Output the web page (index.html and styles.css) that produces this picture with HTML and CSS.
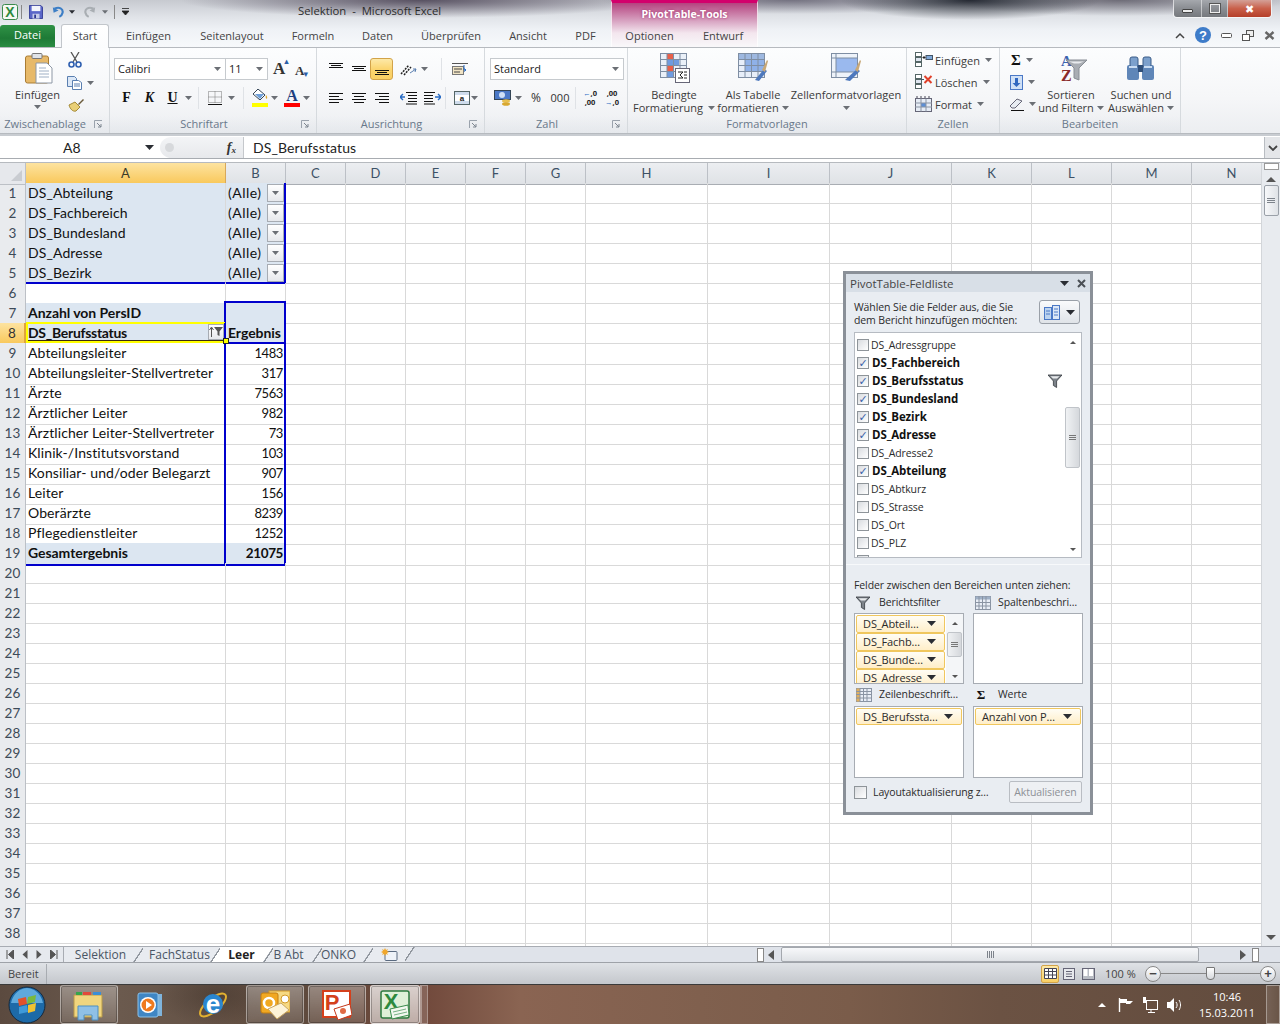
FILE: index.html
```html
<!DOCTYPE html>
<html lang="de">
<head>
<meta charset="utf-8">
<title>Selektion - Microsoft Excel</title>
<link rel="stylesheet" href="styles.css">
</head>
<body>
<svg class="defs" width="0" height="0">
  <symbol id="funnel" viewBox="0 0 14 14"><path d="M0 1h14L8.600 7v6.500L5.400 11.500V7z" fill="#7d838a" stroke="#33383e" stroke-width=".8"/><path d="M2.500 2.200h9L9 4.500H5z" fill="#e8eaec"/></symbol>
  <symbol id="tblgrid" viewBox="0 0 16 14"><rect x=".5" y=".5" width="15" height="13" fill="#e9eef6" stroke="#8a94a3"/><rect x=".5" y=".5" width="15" height="3" fill="#9fb0c6"/><path d="M4 0v14M7.500 0v14M11 0v14M0 6.500h16M0 10h16" stroke="#8a94a3"/></symbol>
  <symbol id="tblgold" viewBox="0 0 16 14"><rect x=".5" y=".5" width="15" height="13" fill="#e9eef6" stroke="#8a94a3"/><rect x=".5" y=".5" width="3.500" height="13" fill="#e0b060"/><path d="M4 0v14M7.500 0v14M11 0v14M0 3.500h16M0 6.500h16M0 10h16" stroke="#8a94a3"/></symbol>
  <symbol id="lines-c" viewBox="0 0 16 14"><path d="M1 2.500h14M3 5.500h10M1 8.500h14M3 11.500h10" stroke="#111" fill="none"/></symbol>
  <symbol id="lines-l" viewBox="0 0 16 14"><path d="M1 2.500h14M1 5.500h10M1 8.500h14M1 11.500h10" stroke="#111" fill="none"/></symbol>
  <symbol id="lines-r" viewBox="0 0 16 14"><path d="M1 2.500h14M5 5.500h10M1 8.500h14M5 11.500h10" stroke="#111" fill="none"/></symbol>
  <symbol id="al-top" viewBox="0 0 16 14"><path d="M1 1.500h14M3 3.500h10M1 5.500h14" stroke="#111" fill="none"/></symbol>
  <symbol id="al-mid" viewBox="0 0 16 14"><path d="M1 4.500h14M3 6.500h10M1 8.500h14" stroke="#111" fill="none"/></symbol>
  <symbol id="al-bot" viewBox="0 0 16 14"><path d="M1 8.500h14M3 10.500h10M1 12.500h14" stroke="#111" fill="none"/></symbol>
  <symbol id="indent-l" viewBox="0 0 18 14"><path d="M6 1.500h11M8 4.500h9M8 7.500h9M8 10.500h9M6 13h11" stroke="#111" fill="none"/><path d="M0 6h5M0 6l3-3M0 6l3 3" stroke="#2a6cc4" stroke-width="1.400" fill="none"/></symbol>
  <symbol id="indent-r" viewBox="0 0 18 14"><path d="M1 1.500h11M1 4.500h9M1 7.500h9M1 10.500h9M1 13h11" stroke="#111" fill="none"/><path d="M12 6h6M18 6l-3-3M18 6l-3 3" stroke="#2a6cc4" stroke-width="1.400" fill="none"/></symbol>
  <symbol id="launch" viewBox="0 0 9 9"><path d="M.5 8V.5H8" stroke="#9aa2ac" fill="none"/><path d="M3 3l4 4M7 4v3H4" stroke="#7d858f" fill="none"/></symbol>
  <symbol id="cell-ins" viewBox="0 0 18 16"><rect x=".5" y=".5" width="6" height="4" fill="#fff" stroke="#566"/><rect x=".5" y="5.500" width="6" height="4" fill="#dfe6f0" stroke="#566"/><rect x=".5" y="10.500" width="6" height="4" fill="#fff" stroke="#566"/><rect x="11" y="3.500" width="6.500" height="4" fill="#7fa8d8" stroke="#456"/><path d="M7.500 5.500h3M9 4v3" stroke="#222"/></symbol>
  <symbol id="cell-del" viewBox="0 0 18 16"><rect x=".5" y=".5" width="6" height="4" fill="#fff" stroke="#566"/><rect x=".5" y="5.500" width="6" height="4" fill="#dfe6f0" stroke="#566"/><rect x=".5" y="10.500" width="6" height="4" fill="#fff" stroke="#566"/><path d="M6 5.500h3" stroke="#456"/><path d="M9.500 2l7 7M16.500 2l-7 7" stroke="#e0402a" stroke-width="2"/></symbol>
  <symbol id="cell-fmt" viewBox="0 0 18 16"><rect x=".5" y="2.500" width="16" height="13" fill="#e6ecf5" stroke="#667"/><rect x="6" y="7" width="5" height="4" fill="#5c8fd6"/><path d="M6 2.500v13M11 2.500v13M0 7h17M0 11h17" stroke="#8a94a3"/><path d="M2 0v2M6 0v2M10 0v2M14 0v2" stroke="#445"/></symbol>
  <symbol id="table-big" viewBox="0 0 30 30"><rect x=".5" y=".5" width="26" height="24" fill="#e7eef9" stroke="#7f8ea3"/><rect x="1" y="1" width="25" height="5" fill="#9eb8e0"/><rect x="7" y="6" width="19" height="13" fill="#8fb1e8"/><path d="M7 0v25M13.500 0v25M20 0v25M0 6.500h27M0 12.500h27M0 18.500h27" stroke="#7f8ea3"/><path d="M17 27l9-11 3 2-8 10z" fill="#4d78bd"/><path d="M24 17l5-10 1 1-3 11z" fill="#c8a877"/></symbol>
  <symbol id="style-big" viewBox="0 0 30 30"><rect x=".5" y=".5" width="26" height="24" fill="#eef3fa" stroke="#7f8ea3"/><rect x="5" y="5" width="21" height="14" fill="#9ab9ee"/><path d="M5 0v25M0 5h27M0 19h27" stroke="#7f8ea3"/><path d="M14 27l12-11 3 2-10 10z" fill="#4d78bd"/><path d="M24 17l5-10 1 1-3 11z" fill="#c8a877"/></symbol>
  <symbol id="dn" viewBox="0 0 7 4"><path d="M0 0h7L3.500 4z" fill="#6b6f75"/></symbol>
  <symbol id="dnk" viewBox="0 0 9 5"><path d="M0 0h9L4.500 5z" fill="#2a2d33"/></symbol>
</svg>

<div class="app">
  <header class="chrome">
    <div class="titlerow">
      <div class="qat">
        <svg class="xl-small" width="16" height="16" viewBox="0 0 16 16"><rect x=".5" y=".5" width="15" height="15" rx="2" fill="#f5f8f3" stroke="#3b8a4e"/><text x="8" y="13" text-anchor="middle" class="xl-x">X</text></svg>
        <span class="qsep"></span>
        <svg width="14" height="14" viewBox="0 0 16 16"><path d="M.5.500h13l2 2v13H.5z" fill="#5a66c8" stroke="#2b3590"/><rect x="3" y="1" width="10" height="6" fill="#f3f5fb"/><rect x="4" y="10" width="8" height="5.500" fill="#c6cce8"/><rect x="6" y="11" width="2" height="4" fill="#2b3590"/></svg>
        <svg class="q-undo" width="13" height="12" viewBox="0 0 16 14"><path d="M3 3c6-3 11 0 10 5-.5 2.500-2 4-4 5" fill="none" stroke="#3c7ec6" stroke-width="2.600"/><path d="M1 1l1 7 6-3z" fill="#3c7ec6"/></svg>
        <svg class="q-dn" width="6" height="4"><use href="#dnk"/></svg>
        <svg class="q-redo" width="13" height="12" viewBox="0 0 16 14"><path d="M13 3C7 0 2 3 3 8c.5 2.500 2 4 4 5" fill="none" stroke="#a9aeb3" stroke-width="2.600"/><path d="M15 1l-1 7-6-3z" fill="#a9aeb3"/></svg>
        <svg class="q-dn2" width="6" height="4"><use href="#dn"/></svg>
        <span class="qsep"></span>
        <svg class="q-cust" width="7" height="7" viewBox="0 0 7 7"><path d="M0 .5h7M0 3h7L3.500 7z" stroke="#222" fill="#222" stroke-width=".8"/></svg>
      </div>
      <div class="doc-title">Selektion&nbsp; - &nbsp;Microsoft Excel</div>
      <div class="win-btns">
        <span class="wb wb-min"><i></i></span>
        <span class="wb wb-max"><i></i></span>
        <span class="wb wb-close">✖</span>
      </div>
    </div>
    <div class="pivot-band"><span>PivotTable-Tools</span></div>
    <nav class="tabs">
      <span class="tab-file">Datei</span>
      <span class="tab-start">Start</span>
      <span class="tab">Einfügen</span>
      <span class="tab">Seitenlayout</span>
      <span class="tab">Formeln</span>
      <span class="tab">Daten</span>
      <span class="tab">Überprüfen</span>
      <span class="tab">Ansicht</span>
      <span class="tab">PDF</span>
      <span class="tab">Optionen</span>
      <span class="tab">Entwurf</span>
      <span class="tab-right">
        <svg width="10" height="7" viewBox="0 0 10 7"><path d="M1 6l4-4 4 4" fill="none" stroke="#444" stroke-width="1.500"/></svg>
        <svg width="16" height="16" viewBox="0 0 16 16"><circle cx="8" cy="8" r="8" fill="#3e7cc9"/><text x="8" y="12.500" text-anchor="middle" class="help-q">?</text></svg>
        <svg width="11" height="5" viewBox="0 0 11 5"><rect x=".5" y=".5" width="10" height="4" rx="1" fill="#fff" stroke="#555"/></svg>
        <svg width="12" height="11" viewBox="0 0 12 11"><rect x="4.500" y=".5" width="7" height="6" fill="#eee" stroke="#555"/><rect x=".5" y="4.500" width="7" height="6" fill="#fff" stroke="#555"/></svg>
        <svg width="11" height="9" viewBox="0 0 11 9"><path d="M1.500 1l8 7M9.500 1l-8 7" stroke="#666" stroke-width="2.400"/></svg>
      </span>
    </nav>
  </header>

  <section class="ribbon">
    <div class="group g-clip">
      <div class="gbody clip-body">
        <div class="bigbtn paste-btn">
          <svg width="28" height="32" viewBox="0 0 28 32"><rect x=".5" y="3" width="23" height="27" rx="2" fill="#e7b969" stroke="#a97c34"/><rect x="7" y=".5" width="10" height="5" rx="1" fill="#dfe3e8" stroke="#777"/><path d="M11 10h11l5 5v15H11z" fill="#fff" stroke="#8d97a5"/><path d="M14 15h7M14 18h10M14 21h10M14 24h10" stroke="#9fb0c5"/></svg>
          <span class="paste-label">Einfügen</span>
          <svg class="big-dn" width="7" height="4"><use href="#dn"/></svg>
        </div>
        <div class="clip-col">
          <svg width="14" height="16" viewBox="0 0 14 16"><path d="M3 0l6 10M11 0L5 10" stroke="#555" stroke-width="1.300"/><circle cx="3.500" cy="12.500" r="2.500" fill="none" stroke="#2f5fb0" stroke-width="1.600"/><circle cx="10.500" cy="12.500" r="2.500" fill="none" stroke="#2f5fb0" stroke-width="1.600"/></svg>
          <span class="copy-row"><svg width="15" height="14" viewBox="0 0 15 14"><path d="M.5.500h7l2 2v8H.5z" fill="#dbe7f6" stroke="#5a7fb0"/><path d="M5.500 4.500h6l3 2v7h-9z" fill="#fff" stroke="#5a7fb0"/><path d="M7 8h6M7 10h6" stroke="#5a7fb0"/></svg><svg width="7" height="4"><use href="#dn"/></svg></span>
          <svg width="17" height="14" viewBox="0 0 17 14"><path d="M1 7l6-3 5 5-4 4c-3 1-6-2-7-6z" fill="#e9cf76" stroke="#a48a38"/><path d="M10 6l5-5 1 1-5 5z" fill="#6a5a3a"/></svg>
        </div>
      </div>
      <div class="glabel lbl-clip">Zwischenablage<svg class="launch" width="9" height="9"><use href="#launch"/></svg></div>
    </div>

    <div class="group g-font">
      <div class="gbody col">
        <div class="ctl-row font-row1">
          <span class="combo combo-font">Calibri<svg width="7" height="4"><use href="#dn"/></svg></span>
          <span class="combo combo-size">11<svg width="7" height="4"><use href="#dn"/></svg></span>
          <span class="grow">A<sup>▴</sup></span>
          <span class="shrink">A<sup>▾</sup></span>
        </div>
        <div class="ctl-row font-row2">
          <span class="ser">F</span>
          <span class="ser ital">K</span>
          <span class="ser under">U</span>
          <svg class="dd" width="7" height="4"><use href="#dn"/></svg>
          <span class="vsep vsep-a"></span>
          <svg class="border-ic" width="14" height="14" viewBox="0 0 14 14"><path d="M.5.500h13v11H.5zM7 .5v11M.5 6h13" stroke="#777" fill="none" stroke-dasharray="1 1"/><path d="M0 13.500h14" stroke="#111"/></svg>
          <svg class="dd" width="7" height="4"><use href="#dn"/></svg>
          <span class="vsep vsep-b"></span>
          <span class="bar-ic"><svg width="16" height="11" viewBox="0 0 16 11"><path d="M6 0l7 6-5 5-7-6z" fill="#fff" stroke="#345"/><path d="M3 5h9L8 10z" fill="#6f9fd8"/><path d="M14 6c1.500 2 1.500 3 .5 4-1-1-1-2-.5-4z" fill="#e0a92c"/></svg><i class="yellow"></i></span>
          <svg class="dd" width="7" height="4"><use href="#dn"/></svg>
          <span class="bar-ic"><span class="fc-a">A</span><i class="red"></i></span>
          <svg class="dd" width="7" height="4"><use href="#dn"/></svg>
        </div>
      </div>
      <div class="glabel"><span class="lbl-shift">Schriftart</span><svg class="launch" width="9" height="9"><use href="#launch"/></svg></div>
    </div>

    <div class="group g-align">
      <div class="gbody col">
        <div class="ctl-row align-row1">
          <span class="ic22"><svg width="16" height="14"><use href="#al-top"/></svg></span>
          <span class="ic22"><svg width="16" height="14"><use href="#al-mid"/></svg></span>
          <span class="ic22 on"><svg width="16" height="14"><use href="#al-bot"/></svg></span>
          <span class="ic22 orient"><svg width="18" height="14" viewBox="0 0 18 14"><path d="M1 12L9 3M4 13l7-8" stroke="#222" stroke-width="1.500" stroke-dasharray="2 1"/><path d="M10 11l6-4M16 7l-3 0M16 7l-1 3" stroke="#5a7fb0" fill="none"/></svg></span>
          <svg class="dd" width="7" height="4"><use href="#dn"/></svg>
          <span class="vsep vsep-c"></span>
          <svg width="16" height="14" viewBox="0 0 16 14"><path d="M0 1.500h16" stroke="#555"/><rect x=".5" y="4.500" width="11" height="8" fill="#f1e4c4" stroke="#777"/><path d="M2 7h8M2 10h6" stroke="#444"/><path d="M12 3v5l2 0M14 8l-2-1.500M14 8l-2 1.500" stroke="#2a6cc4" fill="none"/></svg>
        </div>
        <div class="ctl-row align-row2">
          <span class="ic22"><svg width="16" height="14"><use href="#lines-l"/></svg></span>
          <span class="ic22"><svg width="16" height="14"><use href="#lines-c"/></svg></span>
          <span class="ic22"><svg width="16" height="14"><use href="#lines-r"/></svg></span>
          <span class="ic22 orient"><svg width="18" height="14"><use href="#indent-l"/></svg></span>
          <span class="ic22"><svg width="18" height="14"><use href="#indent-r"/></svg></span>
          <span class="vsep vsep-d"></span>
          <svg width="16" height="14" viewBox="0 0 16 14"><rect x=".5" y=".5" width="15" height="13" fill="#cfdcec" stroke="#566"/><rect x="1" y="4" width="14" height="6" fill="#fff"/><text x="8" y="9.500" text-anchor="middle" class="merge-a">a</text></svg>
          <svg class="dd" width="7" height="4"><use href="#dn"/></svg>
        </div>
      </div>
      <div class="glabel"><span class="lbl-shift">Ausrichtung</span><svg class="launch" width="9" height="9"><use href="#launch"/></svg></div>
    </div>

    <div class="group g-num">
      <div class="gbody col">
        <div class="ctl-row num-row1"><span class="combo combo-std">Standard<svg width="7" height="4"><use href="#dn"/></svg></span></div>
        <div class="ctl-row num-row2">
          <svg width="18" height="16" viewBox="0 0 18 16"><rect x=".5" y=".5" width="16" height="9" fill="#4a78c6" stroke="#345"/><circle cx="8" cy="5" r="3" fill="#cfe0f6"/><ellipse cx="12" cy="11" rx="4" ry="1.800" fill="#e8c050"/><ellipse cx="12" cy="14" rx="4" ry="1.800" fill="#d8a830"/></svg>
          <svg class="dd" width="7" height="4"><use href="#dn"/></svg>
          <span class="num-t pct">%</span>
          <span class="num-t tsd">000</span>
          <span class="vsep vsep-e"></span>
          <span class="dec"><b><em>←</em>,0</b><b>,00</b></span>
          <span class="dec"><b>,00</b><b><em>→</em>,0</b></span>
        </div>
      </div>
      <div class="glabel"><span class="lbl-shift">Zahl</span><svg class="launch" width="9" height="9"><use href="#launch"/></svg></div>
    </div>

    <div class="group g-styles">
      <div class="gbody styles-body">
        <div class="bigbtn b-cond">
          <svg width="30" height="30" viewBox="0 0 30 30"><rect x=".5" y=".5" width="26" height="24" fill="#eaf0f8" stroke="#7f8ea3"/><rect x="7" y="1" width="6" height="6" fill="#e8604a"/><rect x="7" y="7" width="12" height="6" fill="#6f9be0"/><rect x="7" y="13" width="6" height="6" fill="#e8604a"/><rect x="7" y="19" width="6" height="5" fill="#6f9be0"/><path d="M7 0v25M13.500 0v25M20 0v25M0 6.500h27M0 12.500h27M0 18.500h27" stroke="#7f8ea3"/><rect x="15.500" y="15.500" width="14" height="14" fill="#fff" stroke="#667"/><path d="M18 19h5l-3 3 3 3h-5M24 19h3M24 22h3M24 25h3" fill="none" stroke="#222"/></svg>
          <span class="big-t">Bedingte</span>
          <span class="big-t">Formatierung <svg width="7" height="4"><use href="#dn"/></svg></span>
        </div>
        <div class="bigbtn b-table">
          <svg width="30" height="30"><use href="#table-big"/></svg>
          <span class="big-t">Als Tabelle</span>
          <span class="big-t">formatieren <svg width="7" height="4"><use href="#dn"/></svg></span>
        </div>
        <div class="bigbtn b-style">
          <svg width="30" height="30"><use href="#style-big"/></svg>
          <span class="big-t">Zellenformatvorlagen</span>
          <span class="big-t"><svg width="7" height="4"><use href="#dn"/></svg></span>
        </div>
      </div>
      <div class="glabel">Formatvorlagen</div>
    </div>

    <div class="group g-cells">
      <div class="gbody col cells-body">
        <span class="cell-cmd"><svg width="18" height="16"><use href="#cell-ins"/></svg>Einfügen <svg class="cdd" width="7" height="4"><use href="#dn"/></svg></span>
        <span class="cell-cmd"><svg width="18" height="16"><use href="#cell-del"/></svg>Löschen <svg class="cdd" width="7" height="4"><use href="#dn"/></svg></span>
        <span class="cell-cmd"><svg width="18" height="16"><use href="#cell-fmt"/></svg>Format <svg class="cdd" width="7" height="4"><use href="#dn"/></svg></span>
      </div>
      <div class="glabel">Zellen</div>
    </div>

    <div class="group g-edit">
      <div class="gbody edit-body">
        <div class="edit-col">
          <span class="edit-cmd"><span class="sigma">Σ</span><svg width="7" height="4"><use href="#dn"/></svg></span>
          <span class="edit-cmd"><svg width="13" height="15" viewBox="0 0 13 15"><rect x=".5" y=".5" width="12" height="14" fill="#cfe0f6" stroke="#4a78c6"/><path d="M5 3h3v5h2.500L6.500 12 2.500 8H5z" fill="#2f67c0"/></svg><svg width="7" height="4"><use href="#dn"/></svg></span>
          <span class="edit-cmd"><svg width="15" height="13" viewBox="0 0 15 13"><path d="M1 8l7-7 5 2-7 7H3z" fill="#e8ecf2" stroke="#667"/><path d="M2 12.500h13" stroke="#111"/></svg><svg width="7" height="4"><use href="#dn"/></svg></span>
        </div>
        <div class="bigbtn b-sort">
          <svg width="32" height="30" viewBox="0 0 32 30"><text x="6" y="13" class="sort-a">A</text><text x="6" y="28" class="sort-z">Z</text><path d="M11 7h21l-8 8v12l-5-2V15z" fill="#a9adb3" stroke="#888d94"/><path d="M14 8.500h15l-5 2h-5z" fill="#e9ebee"/></svg>
          <span class="big-t">Sortieren</span>
          <span class="big-t">und Filtern <svg width="7" height="4"><use href="#dn"/></svg></span>
        </div>
        <div class="bigbtn b-find">
          <svg width="30" height="30" viewBox="0 0 30 30"><rect x="1" y="12" width="12" height="15" rx="2" fill="#5f86b8"/><rect x="16" y="12" width="12" height="15" rx="2" fill="#5f86b8"/><rect x="4" y="4" width="8" height="10" rx="2" fill="#7ca0cc" stroke="#3b5c88"/><rect x="17" y="4" width="8" height="10" rx="2" fill="#7ca0cc" stroke="#3b5c88"/><rect x="12" y="12" width="5" height="7" fill="#2f4f7a"/><path d="M3 14h8M18 14h8" stroke="#c9dcf2" stroke-width="2"/></svg>
          <span class="big-t">Suchen und</span>
          <span class="big-t">Auswählen <svg width="7" height="4"><use href="#dn"/></svg></span>
        </div>
      </div>
      <div class="glabel">Bearbeiten</div>
    </div>
  </section>

  <section class="formula">
    <div class="namebox"><span>A8</span><svg width="9" height="5"><use href="#dnk"/></svg></div>
    <div class="fx-wrap"><span class="fx-knob"></span><span class="fx">f<sub>x</sub></span></div>
    <div class="fx-input">DS_Berufsstatus</div>
    <div class="fx-exp"><svg width="10" height="6" viewBox="0 0 10 6"><path d="M1 1l4 4 4-4" fill="none" stroke="#444" stroke-width="1.800"/></svg></div>
  </section>

  <section class="sheet">
    <div class="grid">
      <div class="colheads">
        <span class="corner"></span><span class="ch active">A</span><span class="ch">B</span><span class="ch">C</span><span class="ch">D</span><span class="ch">E</span><span class="ch">F</span><span class="ch">G</span><span class="ch">H</span><span class="ch">I</span><span class="ch">J</span><span class="ch">K</span><span class="ch">L</span><span class="ch">M</span><span class="ch">N</span>
      </div>
      <div class="row"><span class="rh">1</span><span class="c fill">DS_Abteilung</span><span class="c fill pf"><span>(Alle)</span><span class="pf-btn"><svg width="7" height="4"><use href="#dn"/></svg></span></span><span class="rest"></span></div>
      <div class="row"><span class="rh">2</span><span class="c fill">DS_Fachbereich</span><span class="c fill pf"><span>(Alle)</span><span class="pf-btn"><svg width="7" height="4"><use href="#dn"/></svg></span></span><span class="rest"></span></div>
      <div class="row"><span class="rh">3</span><span class="c fill">DS_Bundesland</span><span class="c fill pf"><span>(Alle)</span><span class="pf-btn"><svg width="7" height="4"><use href="#dn"/></svg></span></span><span class="rest"></span></div>
      <div class="row"><span class="rh">4</span><span class="c fill">DS_Adresse</span><span class="c fill pf"><span>(Alle)</span><span class="pf-btn"><svg width="7" height="4"><use href="#dn"/></svg></span></span><span class="rest"></span></div>
      <div class="row"><span class="rh">5</span><span class="c fill bb">DS_Bezirk</span><span class="c fill pf bb"><span>(Alle)</span><span class="pf-btn"><svg width="7" height="4"><use href="#dn"/></svg></span></span><span class="rest"></span></div>
      <div class="row"><span class="rh">6</span><span class="c"></span><span class="c"></span><span class="rest"></span></div>
      <div class="row"><span class="rh">7</span><span class="c fill b">Anzahl von PersID</span><span class="c fill vbox btop"></span><span class="rest"></span></div>
      <div class="row"><span class="rh active">8</span><span class="c fill b cur">DS_Berufsstatus<span class="sort-btn"><svg width="14" height="12" viewBox="0 0 14 12"><path d="M2.500 11V2M.5 4l2-3 2 3" fill="none" stroke="#555"/><path d="M5 1h9L10.500 5.500V10L8.500 9V5.500z" fill="#555"/></svg></span><i class="handle"></i></span><span class="c fill b vbox bb">Ergebnis</span><span class="rest"></span></div>
      <div class="row"><span class="rh">9</span><span class="c">Abteilungsleiter</span><span class="c num vbox">1483</span><span class="rest"></span></div>
      <div class="row"><span class="rh">10</span><span class="c">Abteilungsleiter-Stellvertreter</span><span class="c num vbox">317</span><span class="rest"></span></div>
      <div class="row"><span class="rh">11</span><span class="c">Ärzte</span><span class="c num vbox">7563</span><span class="rest"></span></div>
      <div class="row"><span class="rh">12</span><span class="c">Ärztlicher Leiter</span><span class="c num vbox">982</span><span class="rest"></span></div>
      <div class="row"><span class="rh">13</span><span class="c">Ärztlicher Leiter-Stellvertreter</span><span class="c num vbox">73</span><span class="rest"></span></div>
      <div class="row"><span class="rh">14</span><span class="c">Klinik-/Institutsvorstand</span><span class="c num vbox">103</span><span class="rest"></span></div>
      <div class="row"><span class="rh">15</span><span class="c">Konsiliar- und/oder Belegarzt</span><span class="c num vbox">907</span><span class="rest"></span></div>
      <div class="row"><span class="rh">16</span><span class="c">Leiter</span><span class="c num vbox">156</span><span class="rest"></span></div>
      <div class="row"><span class="rh">17</span><span class="c">Oberärzte</span><span class="c num vbox">8239</span><span class="rest"></span></div>
      <div class="row"><span class="rh">18</span><span class="c lb">Pflegedienstleiter</span><span class="c num vbox lb">1252</span><span class="rest"></span></div>
      <div class="row"><span class="rh">19</span><span class="c fill b bb">Gesamtergebnis</span><span class="c fill b num vbox bb">21075</span><span class="rest"></span></div>
      <div class="row"><span class="rh">20</span><span class="c"></span><span class="c"></span><span class="rest"></span></div>
      <div class="row"><span class="rh">21</span><span class="c"></span><span class="c"></span><span class="rest"></span></div>
      <div class="row"><span class="rh">22</span><span class="c"></span><span class="c"></span><span class="rest"></span></div>
      <div class="row"><span class="rh">23</span><span class="c"></span><span class="c"></span><span class="rest"></span></div>
      <div class="row"><span class="rh">24</span><span class="c"></span><span class="c"></span><span class="rest"></span></div>
      <div class="row"><span class="rh">25</span><span class="c"></span><span class="c"></span><span class="rest"></span></div>
      <div class="row"><span class="rh">26</span><span class="c"></span><span class="c"></span><span class="rest"></span></div>
      <div class="row"><span class="rh">27</span><span class="c"></span><span class="c"></span><span class="rest"></span></div>
      <div class="row"><span class="rh">28</span><span class="c"></span><span class="c"></span><span class="rest"></span></div>
      <div class="row"><span class="rh">29</span><span class="c"></span><span class="c"></span><span class="rest"></span></div>
      <div class="row"><span class="rh">30</span><span class="c"></span><span class="c"></span><span class="rest"></span></div>
      <div class="row"><span class="rh">31</span><span class="c"></span><span class="c"></span><span class="rest"></span></div>
      <div class="row"><span class="rh">32</span><span class="c"></span><span class="c"></span><span class="rest"></span></div>
      <div class="row"><span class="rh">33</span><span class="c"></span><span class="c"></span><span class="rest"></span></div>
      <div class="row"><span class="rh">34</span><span class="c"></span><span class="c"></span><span class="rest"></span></div>
      <div class="row"><span class="rh">35</span><span class="c"></span><span class="c"></span><span class="rest"></span></div>
      <div class="row"><span class="rh">36</span><span class="c"></span><span class="c"></span><span class="rest"></span></div>
      <div class="row"><span class="rh">37</span><span class="c"></span><span class="c"></span><span class="rest"></span></div>
      <div class="row"><span class="rh">38</span><span class="c"></span><span class="c"></span><span class="rest"></span></div>
      <div class="row"><span class="rh"></span><span class="c"></span><span class="c"></span><span class="rest"></span></div>
    </div>
    <div class="vscroll">
      <span class="split-h"></span>
      <span class="arrow-up"></span>
      <span class="vthumb"><i></i><i></i><i></i></span>
      <span class="vtrack"></span>
      <span class="arrow-down"></span>
    </div>
  </section>

  <section class="tabbar">
    <div class="tnav">
      <svg width="8" height="9" viewBox="0 0 8 9"><path d="M1 0v9M7.500 0v9L2.500 4.500z" stroke="#555" fill="#555"/></svg>
      <svg width="6" height="9" viewBox="0 0 6 9"><path d="M5.500 0v9L.5 4.500z" fill="#555"/></svg>
      <svg width="6" height="9" viewBox="0 0 6 9"><path d="M.5 0v9l5-4.500z" fill="#555"/></svg>
      <svg width="8" height="9" viewBox="0 0 8 9"><path d="M7 0v9M.5 0v9l5-4.500z" stroke="#555" fill="#555"/></svg>
    </div>
    <div class="stabs">
      <span class="st st1">Selektion</span>
      <span class="st st2">FachStatus</span>
      <span class="st st3">Leer</span>
      <span class="st st4">B Abt</span>
      <span class="st st5">ONKO</span>
      <span class="st st6"><svg width="17" height="14" viewBox="0 0 17 14"><rect x="4" y="3.500" width="12" height="9" rx="1" fill="#eef2f8" stroke="#5a6a80"/><path d="M4 0l1 2 2-1-1 2 2 1-2 1 1 2-2-1-1 2-1-2-2 1 1-2-2-1 2-1-1-2 2 1z" fill="#f0a72c"/></svg></span>
    </div>
    <div class="hsplit"><span class="tick"></span></div>
    <div class="hscroll">
      <svg class="h-l" width="6" height="10" viewBox="0 0 6 10"><path d="M6 0v10L0 5z" fill="#555"/></svg>
      <span class="hthumb"><i></i><i></i><i></i><i></i></span>
      <svg class="h-r" width="6" height="10" viewBox="0 0 6 10"><path d="M0 0v10l6-5z" fill="#555"/></svg>
      <span class="tick tick-r"></span>
    </div>
  </section>

  <footer class="status">
    <span class="ready">Bereit</span>
    <div class="st-right">
      <span class="view on"><svg width="13" height="11" viewBox="0 0 13 11"><path d="M.5.500h12v10H.5zM4.500 0v11M8.500 0v11M0 3.500h13M0 7h13" stroke="#445" fill="#fff"/></svg></span>
      <span class="view"><svg width="12" height="12" viewBox="0 0 12 12"><rect x=".5" y=".5" width="11" height="11" fill="#e6e8ec" stroke="#667"/><path d="M3 3.500h6M3 6h6M3 8.500h6" stroke="#667"/></svg></span>
      <span class="view"><svg width="13" height="12" viewBox="0 0 13 12"><rect x=".5" y=".5" width="12" height="11" fill="#b9bdc4" stroke="#667"/><rect x="1.500" y="1" width="4" height="7" fill="#fff"/><rect x="7" y="1" width="4" height="7" fill="#fff"/></svg></span>
      <span class="zoom-pct">100 %</span>
      <span class="zoom-btn">−</span>
      <span class="slider"><i></i></span>
      <span class="zoom-btn">+</span>
    </div>
  </footer>

  <footer class="taskbar">
    <svg class="orb" width="38" height="38" viewBox="0 0 38 38"><circle cx="19" cy="19" r="18" fill="#1d6aa8" stroke="#16293c"/><path d="M3 17c2-10 10-15 16-15s14 5 16 15z" fill="#5ea9dd"/><path d="M10 13l8-2 1 7-8 2z" fill="#e2522b"/><path d="M20 11l8-2-1 7-8 2z" fill="#7ab93c"/><path d="M11 21l8-2 1 7-9 2z" fill="#3f9ad9"/><path d="M20 19l8-2-1 8-7 2z" fill="#f1c232"/></svg>
    <span class="tb tb-open tb-a"><svg width="32" height="32" viewBox="0 0 32 32"><path d="M1 6h28v22H1z" fill="#f0d57e" stroke="#b89a48"/><path d="M3 3h6v3H3z" fill="#35a54a"/><path d="M10 3h8v3h-8z" fill="#e14a3a"/><path d="M20 3h8v3h-8z" fill="#3b8ed6"/><path d="M5 17h20v14h-6v-5h-8v5H5z" fill="#8fc0e6" stroke="#4f8fbf"/></svg></span>
    <span class="tb tb-b"><svg width="26" height="28" viewBox="0 0 26 28"><rect x="5" y="3" width="20" height="22" fill="#7fb4dc"/><rect x="1" y="2" width="20" height="24" rx="2" fill="#3f86c4" stroke="#8cc0e6"/><circle cx="11" cy="14" r="8" fill="#fff"/><circle cx="11" cy="14" r="6.500" fill="#ef7a1e"/><path d="M9 10l6 4-6 4z" fill="#fff"/></svg></span>
    <span class="tb tb-c"><svg width="32" height="32" viewBox="0 0 32 32"><ellipse cx="16" cy="16" rx="16" ry="6.500" transform="rotate(-40 16 16)" fill="none" stroke="#e2b030" stroke-width="2"/><circle cx="16" cy="15" r="10" fill="#2a86cf"/><text x="16" y="24" text-anchor="middle" class="ie-e">e</text></svg></span>
    <span class="tb tb-open tb-d"><svg width="30" height="30" viewBox="0 0 30 30"><rect x="9" y="1" width="21" height="21" fill="#f6d983" stroke="#d49a26"/><rect x="1" y="3" width="17" height="20" rx="2" fill="#f1a822" stroke="#c47e10"/><circle cx="9" cy="13" r="5" fill="none" stroke="#fff" stroke-width="2.500"/><path d="M8 19l13-6 8 7-12 9z" fill="#fdf3d8" stroke="#c9a660"/><circle cx="25" cy="9" r="4" fill="#fff" stroke="#d49a26"/></svg></span>
    <span class="tb tb-open tb-e"><svg width="30" height="30" viewBox="0 0 30 30"><rect x="1" y="1" width="27" height="26" fill="#fff" stroke="#d4401c" stroke-width="2"/><text x="10" y="20" text-anchor="middle" class="ppt-p">P</text><path d="M12 19l16-5 2 11-14 5z" fill="#fff" stroke="#c4381a"/><circle cx="21" cy="21" r="3" fill="#e06a44"/></svg></span>
    <span class="tb tb-open tb-f tb-lit"><svg width="30" height="30" viewBox="0 0 30 30"><rect x="1" y="1" width="28" height="27" rx="2" fill="#dff0d8" stroke="#2d7a3e" stroke-width="1.500"/><text x="11" y="19" text-anchor="middle" class="xl-big">X</text><path d="M10 19l18-4 1 10-17 4z" fill="#f2f8ef" stroke="#3a8c4c"/><path d="M13 22l13-3M14 25l13-3" stroke="#76b184"/></svg></span>
    <span class="tb-stack"></span>
    <div class="tray">
      <span class="tray-up"></span>
      <svg width="16" height="16" viewBox="0 0 16 16"><path d="M1.500 1v14" stroke="#fff" stroke-width="1.400"/><path d="M2 2h7v2h6l-3 3 1 0H8V6H2z" fill="#fff"/></svg>
      <svg width="16" height="16" viewBox="0 0 16 16"><rect x="4.500" y="3.500" width="11" height="9" fill="none" stroke="#fff"/><path d="M9 13v2M6 15.500h7" stroke="#fff"/><rect x="1" y="0" width="3" height="6" fill="#fff"/></svg>
      <svg width="16" height="16" viewBox="0 0 16 16"><path d="M1 5h3l4-4v14l-4-4H1z" fill="#fff"/><path d="M10 5c1.500 2 1.500 4 0 6M13 3c2 3 2 7 0 10" stroke="#fff" fill="none"/></svg>
      <div class="clock"><span>10:46</span><span>15.03.2011</span></div>
      <span class="show-desk"></span>
    </div>
  </footer>

  <aside class="panel">
    <div class="p-head"><span>PivotTable-Feldliste</span><span class="p-head-ic"><svg width="9" height="5"><use href="#dnk"/></svg><svg width="9" height="9" viewBox="0 0 9 9"><path d="M1 1l7 7M8 1L1 8" stroke="#4a4f55" stroke-width="2"/></svg></span></div>
    <div class="p-intro">
      <p>Wählen Sie die Felder aus, die Sie<br>dem Bericht hinzufügen möchten:</p>
      <span class="p-layout"><svg width="16" height="15" viewBox="0 0 16 15"><rect x=".5" y="2.500" width="7" height="12" fill="#bcd3ef" stroke="#4a78c6"/><rect x="8.500" y=".5" width="7" height="14" fill="#dce8f7" stroke="#4a78c6"/><path d="M2 6h4M2 9h4M10 4h4M10 7h4M10 10h4" stroke="#4a78c6"/></svg><svg width="9" height="5"><use href="#dnk"/></svg></span>
    </div>
    <div class="p-list">
      <div class="p-fields">
        <label class="fld"><i class="cb"></i>DS_Adressgruppe</label>
        <label class="fld on"><i class="cb">✓</i>DS_Fachbereich</label>
        <label class="fld on"><i class="cb">✓</i>DS_Berufsstatus<svg class="fld-f" width="14" height="14"><use href="#funnel"/></svg></label>
        <label class="fld on"><i class="cb">✓</i>DS_Bundesland</label>
        <label class="fld on"><i class="cb">✓</i>DS_Bezirk</label>
        <label class="fld on"><i class="cb">✓</i>DS_Adresse</label>
        <label class="fld"><i class="cb"></i>DS_Adresse2</label>
        <label class="fld on"><i class="cb">✓</i>DS_Abteilung</label>
        <label class="fld"><i class="cb"></i>DS_Abtkurz</label>
        <label class="fld"><i class="cb"></i>DS_Strasse</label>
        <label class="fld"><i class="cb"></i>DS_Ort</label>
        <label class="fld"><i class="cb"></i>DS_PLZ</label>
        <label class="fld"><i class="cb"></i>DS_Tel</label>
      </div>
      <div class="p-sb"><span class="sb-up"></span><span class="sb-thumb"><i></i><i></i><i></i></span><span class="sb-down"></span></div>
    </div>
    <div class="p-rule"></div>
    <p class="p-drag">Felder zwischen den Bereichen unten ziehen:</p>
    <div class="areas">
      <div class="area">
        <div class="a-head"><svg width="14" height="14"><use href="#funnel"/></svg><span>Berichtsfilter</span></div>
        <div class="a-box a-top a-scrollbox">
          <div class="pills">
            <span class="pill">DS_Abteil…<svg width="9" height="5"><use href="#dnk"/></svg></span>
            <span class="pill">DS_Fachb…<svg width="9" height="5"><use href="#dnk"/></svg></span>
            <span class="pill">DS_Bunde…<svg width="9" height="5"><use href="#dnk"/></svg></span>
            <span class="pill">DS_Adresse<svg width="9" height="5"><use href="#dnk"/></svg></span>
          </div>
          <div class="p-sb small"><span class="sb-up"></span><span class="sb-thumb"><i></i><i></i><i></i></span><span class="sb-down"></span></div>
        </div>
      </div>
      <div class="area">
        <div class="a-head"><svg width="16" height="14"><use href="#tblgrid"/></svg><span>Spaltenbeschri…</span></div>
        <div class="a-box a-top"></div>
      </div>
      <div class="area">
        <div class="a-head"><svg width="16" height="14"><use href="#tblgold"/></svg><span>Zeilenbeschrift…</span></div>
        <div class="a-box a-bot"><span class="pill wide">DS_Berufssta…<svg width="9" height="5"><use href="#dnk"/></svg></span></div>
      </div>
      <div class="area">
        <div class="a-head"><span class="a-sigma">Σ</span><span>Werte</span></div>
        <div class="a-box a-bot"><span class="pill wide">Anzahl von P…<svg width="9" height="5"><use href="#dnk"/></svg></span></div>
      </div>
    </div>
    <div class="p-foot">
      <i class="cb cb-big"></i><span>Layoutaktualisierung z…</span><span class="p-update">Aktualisieren</span>
    </div>
  </aside>
</div>
</body>
</html>
```
FILE: styles.css
```css
* { box-sizing: border-box; }
html, body { margin: 0; padding: 0; }
body { width: 1280px; height: 1024px; overflow: hidden; font-family: "Open Sans", "Noto Sans", sans-serif; font-size: 11px; color: #3b3b3b; background: #fff; }
.defs { position: absolute; }
svg { display: block; flex: none; }
.app { position: relative; width: 1280px; height: 1024px; display: flex; flex-direction: column; }

/* window chrome */
.chrome { position: relative; height: 48px; flex: none;
  background:
    radial-gradient(ellipse 130px 20px at 970px 0, rgba(10,15,25,.85), transparent),
    radial-gradient(ellipse 170px 16px at 1120px 0, rgba(50,45,60,.6), transparent),
    radial-gradient(ellipse 240px 18px at 420px 0, rgba(50,40,60,.75), transparent),
    radial-gradient(ellipse 190px 14px at 790px 0, rgba(60,55,75,.6), transparent),
    linear-gradient(#c7cad0 0, #dfe2e7 16px, #eff2f6 30px, #f7f9fb 47px);
  border-bottom: 1px solid #b6babf; }
.titlerow { height: 24px; display: flex; align-items: center; padding-left: 2px; }
.qat { display: flex; align-items: center; width: 296px; flex: none; margin-bottom: 1px; }
.qsep { width: 1px; height: 14px; background: #888; margin: 0 7px 0 3px; }
.q-undo { margin-left: 9px; }
.q-dn { margin-left: 4px; }
.q-redo { margin-left: 8px; }
.q-dn2 { margin-left: 6px; }
.q-dn2 + .qsep { margin-left: 6px; }
.xl-x { font: bold 14px "Liberation Sans", sans-serif; fill: #2d8a3e; }
.doc-title { font-size: 11.300px; color: #2c2c2c; white-space: nowrap; padding-bottom: 3px; }
.win-btns { margin-left: auto; margin-right: 8px; align-self: flex-start; display: flex; height: 18px; border: 1px solid rgba(255,255,255,.65); border-top: 0; border-radius: 0 0 4px 4px; overflow: hidden; }
.wb { display: flex; align-items: center; justify-content: center; background: linear-gradient(#a5a8ad, #8a8d92 50%, #75787d); border-right: 1px solid rgba(255,255,255,.5); color: #fff; }
.wb-min { width: 28px; } .wb-max { width: 26px; }
.wb-min i { width: 11px; height: 4px; background: #eee; border: 1px solid #444; border-radius: 1px; margin-top: 5px; }
.wb-max i { width: 10px; height: 9px; background: transparent; border: 1.500px solid #eee; outline: 1px solid #555; }
.wb-close { width: 43px; background: linear-gradient(#d4a097, #c9604a 50%, #b53f2a); font-size: 11px; border-right: 0; }
.pivot-band { position: absolute; left: 611px; top: 0; width: 147px; height: 47px; border: 1px solid rgba(255,255,255,.75); border-top: 3px solid #d3006c; border-bottom: 0; text-align: center; color: #fff; font-weight: 700; font-size: 10.500px; padding-top: 4px; background: linear-gradient(#b5427f 0, #d8a4c2 18px, #f3e6ee 30px, #f9f8fa 44px); }
.pivot-band span { text-shadow: 0 0 3px #a02a68; }
.tabs { position: absolute; left: 0; right: 0; top: 24px; height: 24px; display: grid; grid-template-columns: 55px 6px 48px 2px 75px 92px 70px 59px 88px 66px 49px 79px 68px 1fr; align-items: center; text-align: center; font-size: 11px; color: #444; }
.tab { padding-bottom: 2px; }
.tab-file { grid-column: 1; height: 22px; margin-top: -1px; background: linear-gradient(#2f9246, #1e7a36 60%, #2a8c42); color: #fff; line-height: 20px; border-radius: 3px 3px 0 0; }
.tab-start { grid-column: 3; height: 24px; line-height: 21px; background: linear-gradient(#fff, #fbfcfd); border: 1px solid #c2c6cb; border-bottom: 0; border-radius: 3px 3px 0 0; z-index: 1; }
.tab-start + .tab { grid-column: 5; }
.tab-right { display: flex; align-items: center; justify-content: flex-end; gap: 10px; padding: 0 5px 2px 0; height: 24px; }
.help-q { font: bold 13px "Liberation Sans", sans-serif; fill: #fff; }

/* ribbon */
.ribbon { height: 86px; flex: none; display: flex; background: linear-gradient(#fcfdfe, #f5f6f8 60%, #eceef1); border-bottom: 1px solid #b6babf; box-shadow: 0 2px 0 #c8ccd1; }
.group { flex: none; display: flex; flex-direction: column; border-right: 1px solid #d6dade; }
.gbody { flex: 1; min-height: 0; display: flex; }
.col { flex-direction: column; }
.glabel { position: relative; height: 17px; text-align: center; color: #69788a; font-size: 11px; line-height: 16px; background: linear-gradient(transparent, rgba(210,215,222,.25)); }
.lbl-clip { padding-right: 19px; white-space: nowrap; }
.launch { position: absolute; right: 6px; top: 4px; }
.lbl-shift { display: inline-block; margin-left: -18px; }
.g-clip { width: 110px; } .g-font { width: 207px; } .g-align { width: 168px; } .g-num { width: 143px; } .g-styles { width: 279px; } .g-cells { width: 93px; } .g-edit { width: 181px; }
.bigbtn { display: flex; flex-direction: column; align-items: center; line-height: 13px; }
.clip-body { padding-left: 14px; }
.paste-btn { width: 47px; padding-top: 5px; }
.paste-btn svg:first-child { margin-left: 3px; }
.paste-label { margin-top: 3px; white-space: nowrap; }
.big-dn { margin-top: 4px; }
.clip-col { margin-left: 2px; height: 64px; padding-top: 4px; display: flex; flex-direction: column; justify-content: space-between; align-items: flex-start; padding-left: 5px; }
.copy-row { display: flex; align-items: center; gap: 5px; margin-left: -1px; }
.ctl-row { display: flex; align-items: center; }
.ctl-row > * { flex: none; }
.font-row1 { padding: 10px 0 0 4px; height: 32px; }
.font-row2 { padding: 5px 0 0 5px; height: 30px; }
.combo { height: 22px; border: 1px solid #c6cace; background: #fff; display: flex; align-items: center; justify-content: space-between; padding: 0 4px 1px 3px; color: #222; font-size: 11px; }
.combo-font { width: 112px; } .combo-size { width: 42px; border-left: 0; }
.grow { font: bold 17px "Liberation Serif", serif; color: #333; margin-left: 5px; width: 20px; display: flex; }
.shrink { font: bold 13px "Liberation Serif", serif; color: #333; margin-left: 2px; width: 20px; display: flex; align-items: flex-end; padding-top: 3px; }
.grow sup, .shrink sup { font-size: 9px; line-height: 9px; color: #2a5ea8; font-family: "DejaVu Sans", sans-serif; margin: -2px 0 0 -1px; }
.ser { width: 23px; text-align: center; font: bold 14px "Liberation Serif", serif; color: #111; }
.ital { font-style: italic; } .under { text-decoration: underline; }
.dd { margin-left: 1px; }
.vsep { width: 1px; height: 22px; background: #dfe2e6; }
.vsep-a { margin: 0 9px 0 6px; }
.border-ic { margin-right: 5px; }
.vsep-b { margin: 0 8px 0 8px; }
.bar-ic { width: 16px; height: 18px; display: flex; flex-direction: column; justify-content: space-between; align-items: center; margin-right: 3px; }
.bar-ic + .dd { margin-right: 6px; margin-left: 0; }
.bar-ic i { width: 16px; height: 4px; display: block; flex: none; }
.yellow { background: #ffff00; } .red { background: #f00; }
.fc-a { font: bold 16px/14px "Liberation Serif", serif; color: #1f3f7f; }
.align-row1 { padding: 10px 0 0 7px; height: 32px; }
.align-row2 { padding: 5px 0 0 7px; height: 30px; }
.ic22 { width: 23px; height: 22px; display: flex; align-items: center; justify-content: center; }
.ic22.on { background: linear-gradient(#fde9a8, #fbd570 50%, #f9cf63); border: 1px solid #d2a349; border-radius: 3px; }
.orient { margin-left: 4px; }
.vsep-c { margin: 0 10px 0 13px; }
.vsep-d { margin: 0 8px 0 2px; }
.merge-a { font: bold 8px "Liberation Sans", sans-serif; fill: #222; }
.num-row1 { padding: 10px 0 0 5px; height: 32px; }
.combo-std { width: 134px; padding-left: 3px; }
.num-row2 { padding: 5px 0 0 9px; height: 30px; }
.num-row2 .dd { margin-left: 3px; }
.num-t { font-size: 12px; color: #333; text-align: center; }
.pct { width: 24px; margin-left: 2px; }
.tsd { width: 26px; margin-left: -1px; font-size: 11px; }
.vsep-e { margin: 0 3px 0 2px; }
.dec { display: flex; flex-direction: column; width: 22px; font-size: 7.500px; line-height: 9px; color: #222; text-align: center; }
.dec b { font-weight: 700; white-space: nowrap; }
.dec em { font-style: normal; color: #2a6cc4; }
.styles-body { display: grid; grid-template-columns: 92px 66px 120px; }
.styles-body .bigbtn { padding-top: 5px; }
.big-t { display: flex; align-items: center; gap: 3px; height: 13px; white-space: nowrap; }
.bigbtn svg + .big-t { margin-top: 5px; }
.b-cond svg:first-child { margin-left: 2px; }
.cells-body { padding: 1px 0 0 8px; }
.cell-cmd { display: flex; align-items: center; height: 22px; gap: 2px; white-space: nowrap; }
.cdd { margin-left: 3px; }
.edit-body { padding-left: 7px; }
.edit-col { width: 30px; display: flex; flex-direction: column; padding-top: 1px; }
.edit-cmd { height: 22px; display: flex; align-items: center; gap: 5px; justify-content: center; }
.sigma { font: bold 15px "Liberation Serif", serif; color: #111; }
.b-sort { width: 72px; padding-top: 5px; margin-left: -2px; }
.b-find { width: 68px; padding-top: 5px; }
.sort-a { font: bold 15px "Liberation Serif", serif; fill: #3b63b0; }
.sort-z { font: bold 16px "Liberation Serif", serif; fill: #8a2a2a; }

/* formula bar */
.formula { height: 22px; flex: none; margin-top: 3px; display: flex; border-bottom: 1px solid #a8acb1; background: #fff; font-family: "Lato", "Open Sans", sans-serif; font-size: 14px; letter-spacing: .1px; color: #222; }
.namebox { width: 157px; display: flex; align-items: center; padding-right: 3px; }
.namebox span { margin-left: 63px; }
.namebox svg { margin-left: auto; }
.fx-wrap { width: 84px; position: relative; background: linear-gradient(#f3f4f6, #e7e9ec); border-right: 1px solid #c5c8cc; display: flex; align-items: center; justify-content: flex-end; padding-right: 6px; border-top-left-radius: 12px 11px; border-bottom-left-radius: 12px 11px; margin-left: 3px; }
.fx-knob { position: absolute; left: 5px; top: 6px; width: 9px; height: 9px; border-radius: 50%; background: #d7d9dc; }
.fx { font: italic bold 14px "Liberation Serif", serif; color: #333; margin-right: 1px; }
.fx sub { font-size: 9px; vertical-align: -1px; }
.fx-input { flex: 1; padding-left: 9px; line-height: 21px; }
.fx-exp { width: 16px; background: #e4e6e9; border-left: 1px solid #b9bdc2; display: flex; align-items: center; justify-content: center; }

/* sheet */
.sheet { height: 784px; flex: none; margin-top: 3px; display: flex; overflow: hidden; background: #fff; border-top: 1px solid #b6babf; }
.grid { width: 1261px; flex: none; overflow: hidden; font-family: "Lato", "Open Sans", sans-serif; font-size: 14px; letter-spacing: .1px; color: #111; }
.colheads { display: grid; grid-template-columns: 26px 200px 60px 60px 60px 60px 60px 60px 122px 122px 122px 80px 80px 80px 80px; height: 20px; }
.corner { background: #e6e8ec; border-right: 1px solid #bcc0c6; border-bottom: 1px solid #bcc0c6; position: relative; }
.corner::after { content: ""; position: absolute; right: 3px; bottom: 3px; border-style: solid; border-width: 0 0 11px 11px; border-color: transparent transparent #c9ccd1 transparent; }
.ch { background: linear-gradient(#eceef1, #dfe2e6); border-right: 1px solid #bcc0c6; border-bottom: 1px solid #a9adb3; text-align: center; line-height: 20px; font-size: 13px; color: #3d5166; }
.ch.active { background: linear-gradient(#fde3a0, #f9c95d); border-right-color: #d8a85a; border-bottom: 2px solid #e0a43c; color: #3a3a2a; }
.row { display: grid; grid-template-columns: 26px 200px 60px 1fr; height: 20px; line-height: 20px; }
.rh { background: #e9ebee; border-right: 1px solid #bcc0c6; border-bottom: 1px solid #bcc0c6; text-align: center; color: #3d4a58; font-size: 13.500px; line-height: 20px; }
.rh.active { background: linear-gradient(#fde3a0, #f9c95d); border-bottom-color: #d8a85a; border-right: 2px solid #e0a43c; color: #333; }
.c { border-right: 1px solid #d9d9d9; border-bottom: 1px solid #d9d9d9; padding-left: 2px; white-space: nowrap; overflow: visible; position: relative; line-height: 19px; }
.rest { border-bottom: 1px solid #d9d9d9;
  background-image: linear-gradient(#d9d9d9,#d9d9d9), linear-gradient(#d9d9d9,#d9d9d9), linear-gradient(#d9d9d9,#d9d9d9), linear-gradient(#d9d9d9,#d9d9d9), linear-gradient(#d9d9d9,#d9d9d9), linear-gradient(#d9d9d9,#d9d9d9), linear-gradient(#d9d9d9,#d9d9d9), linear-gradient(#d9d9d9,#d9d9d9), linear-gradient(#d9d9d9,#d9d9d9), linear-gradient(#d9d9d9,#d9d9d9), linear-gradient(#d9d9d9,#d9d9d9);
  background-repeat: no-repeat; background-size: 1px 100%;
  background-position: 59px 0, 119px 0, 179px 0, 239px 0, 299px 0, 421px 0, 543px 0, 665px 0, 745px 0, 825px 0, 905px 0; }
.fill { background: #dce6f1; }
.b { font-weight: 700; letter-spacing: -.05px; }
.num { text-align: right; font-size: 13px; letter-spacing: -.4px; line-height: 21px; padding-right: 1px; }
.b.num { font-size: 13.500px; letter-spacing: -.4px; }
.pf { display: flex; justify-content: space-between; align-items: flex-start; border-right: 2px solid #0000cc; letter-spacing: .5px; }
.pf-btn { width: 17px; height: 18px; margin-top: 1px; background: linear-gradient(#fff, #e6e8ec); border: 1px solid #a7acb3; display: flex; align-items: center; justify-content: center; }
.bb { border-bottom: 2px solid #0000cc; }
.vbox { margin-left: -2px; border-left: 2px solid #0000cc; border-right: 2px solid #0000cc; padding-left: 2px; }
.btop { margin-top: -2px; border-top: 2px solid #0000cc; }
.lb, .vbox.lb { border-bottom-color: #8db4e2; }
.cur { box-shadow: inset 0 2px 0 -1px #000; border: 0; outline: 2px solid #ff0; outline-offset: -2px; border-bottom: 3px solid #3d2c10; border-left: 2px solid #3d2c10; padding-left: 0; height: 21px; margin-top: -1px; line-height: 21px; margin-right: 1px; letter-spacing: -.3px; }
.sort-btn { position: absolute; right: 1px; top: 2px; width: 16px; height: 16px; background: linear-gradient(#fff, #e6e8ec); border: 1px solid #a7acb3; display: flex; align-items: center; justify-content: center; }
.handle { position: absolute; right: -4px; bottom: -4px; width: 6px; height: 6px; background: #ff0; border: 1px solid #222; z-index: 2; }
.vscroll { flex: 1; display: flex; flex-direction: column; align-items: center; background: #e8ebef; border-left: 1px solid #d3d6da; }
.split-h { width: 15px; height: 7px; background: #fff; border: 1px solid #999; flex: none; }
.arrow-up, .arrow-down { width: 0; height: 0; border-left: 5px solid transparent; border-right: 5px solid transparent; flex: none; }
.arrow-up { border-bottom: 5px solid #555; margin-top: 7px; }
.arrow-down { border-top: 5px solid #555; margin-bottom: 6px; }
.vthumb { width: 15px; height: 31px; margin-top: 3px; border: 1px solid #9aa0a8; border-radius: 2px; background: linear-gradient(90deg, #f7f8fa, #dfe2e6); display: flex; flex-direction: column; gap: 1px; align-items: center; justify-content: center; flex: none; }
.vthumb i { width: 8px; height: 1px; background: #7d838b; }
.vtrack { flex: 1; }

/* sheet tabs */
.tabbar { height: 17px; flex: none; display: flex; background: #dfe3ea; border-top: 1px solid #a8acb3; border-bottom: 1px solid #9ea2a8; font-size: 12px; color: #4a5564; }
.tnav { width: 63px; display: flex; align-items: center; gap: 8px; padding-left: 6px; background: #e6e9ee; }
.stabs { display: flex; height: 100%; width: 694px; flex: none; }
.st { position: relative; height: 15px; flex: none; display: flex; align-items: center; justify-content: center; background: #e8ebf0; line-height: 14px; margin-left: -10px; clip-path: polygon(10px 0, 100% 0, calc(100% - 10px) 100%, 0 100%); }
.st::before { content: ""; position: absolute; left: 0; top: 0; width: 10px; height: 15px; background: linear-gradient(to bottom right, transparent 50%, #8d939b 50%, #8d939b 58%, transparent 58%); }
.st1 { width: 80px; margin-left: 0; padding-right: 6px; clip-path: polygon(0 0, 100% 0, calc(100% - 10px) 100%, 0 100%); border-left: 1px solid #a8acb3; }
.st1::before { display: none; }
.st2 { width: 87px; padding-left: 6px; }
.st3 { width: 63px; background: #fff; color: #222; font-weight: 700; }
.st4 { width: 59px; padding-right: 8px; }
.st5 { width: 61px; padding-right: 8px; }
.st6 { width: 52px; }
.st6::after { content: ""; position: absolute; right: 0; top: 0; width: 10px; height: 15px; background: linear-gradient(to bottom right, transparent 42%, #8d939b 42%, #8d939b 50%, transparent 50%); }
.hsplit { width: 8px; display: flex; align-items: center; }
.tick { width: 7px; height: 14px; background: #fff; border: 1px solid #888; flex: none; }
.hscroll { flex: 1; display: flex; align-items: center; }
.h-l { margin-left: 3px; }
.hthumb { width: 418px; height: 15px; margin-left: 7px; background: linear-gradient(#f7f8fa, #dfe2e6); border: 1px solid #a4a8ae; border-radius: 2px; display: flex; align-items: center; justify-content: center; gap: 1px; }
.hthumb i { width: 1px; height: 7px; background: #7d838b; }
.h-r { margin-left: 41px; }
.tick-r { margin-left: 6px; }

/* status */
.status { height: 22px; flex: none; display: flex; align-items: center; padding-left: 8px; background: linear-gradient(#dfe2e6, #c4c7cc); border-bottom: 1px solid #3a3a3a; font-size: 11px; color: #444; }
.ready { width: 39px; border-right: 1px solid #a8acb1; line-height: 20px; }
.st-right { margin-left: auto; display: flex; align-items: center; width: 239px; height: 100%; }
.view { width: 18px; height: 18px; display: flex; align-items: center; justify-content: center; margin-right: 1px; }
.view.on { background: linear-gradient(#fde9a8, #f9cf63); border: 1px solid #d2a349; border-radius: 2px; }
.zoom-pct { margin-left: 7px; width: 40px; }
.zoom-btn { width: 16px; height: 16px; border-radius: 50%; border: 1px solid #888; background: linear-gradient(#fff, #d6d9dd); display: flex; align-items: center; justify-content: center; font: bold 13px/1 "Liberation Sans", sans-serif; color: #444; flex: none; }
.slider { width: 99px; height: 1px; background: #888; position: relative; flex: none; }
.slider i { position: absolute; left: 45px; top: -6px; width: 9px; height: 13px; background: linear-gradient(#fff, #d6d9dd); border: 1px solid #777; border-radius: 1px 1px 4px 4px; }

/* taskbar */
.taskbar { flex: 1; display: flex; align-items: stretch; padding-left: 8px; color: #fff;
  background:
    radial-gradient(ellipse 60px 30px at 215px 10px, rgba(40,30,25,.3), transparent),
    linear-gradient(90deg, #5b4a3f 0, #6b5a4e 120px, #5e4a3d 300px, #70483b 420px, #8a6452 520px, #80604e 700px, #7a5c4a 850px, #6b5243 1000px, #624c3e 1280px); }
.orb { align-self: center; margin-right: 14px; }
.tb { height: 39px; flex: none; display: flex; align-items: center; justify-content: center; }
.tb-open { background: linear-gradient(rgba(255,255,255,.35), rgba(255,255,255,.12)); border: 1px solid rgba(255,255,255,.35); border-radius: 3px; box-shadow: inset 0 0 0 1px rgba(0,0,0,.25); margin-right: 4px; }
.tb-lit { background: linear-gradient(rgba(255,255,255,.75), rgba(255,255,255,.55)); }
.tb-a { width: 58px; margin-right: 3px; }
.tb-b { width: 58px; margin-right: 4px; }
.tb-c { width: 60px; margin-right: 3px; }
.tb-d, .tb-e { width: 58px; }
.tb-f { width: 50px; margin-right: 0; }
.tb-stack { width: 8px; border: 1px solid rgba(255,255,255,.3); border-left: 2px solid rgba(255,255,255,.35); background: rgba(255,255,255,.15); }
.ie-e { font: bold 26px "Liberation Sans", sans-serif; fill: #fff; }
.ppt-p { font: bold 22px "Liberation Sans", sans-serif; fill: #d4401c; }
.xl-big { font: bold 22px "Liberation Sans", sans-serif; fill: #2d8a3e; }
.tray { margin-left: auto; display: flex; align-items: center; gap: 8px; }
.tray-up { width: 0; height: 0; border-left: 4px solid transparent; border-right: 4px solid transparent; border-bottom: 4px solid #fff; margin-right: 4px; }
.clock { width: 70px; margin-left: 2px; text-align: center; display: flex; flex-direction: column; gap: 1px; font-size: 11px; line-height: 15px; color: #fff; }
.show-desk { width: 14px; height: 39px; margin-left: -4px; border: 1px solid rgba(255,255,255,.4); background: linear-gradient(90deg, rgba(255,255,255,.12), rgba(255,255,255,.05)); }

/* pivot panel */
.panel { position: absolute; left: 843px; top: 271px; width: 250px; height: 544px; background: #e9edf2; border: 3px solid #8a9098; display: flex; flex-direction: column; font-size: 10.500px; color: #2b2b2b; line-height: 13px; letter-spacing: -.1px; }
.p-head { height: 18px; flex: none; background: #d8dfe7; display: flex; justify-content: space-between; align-items: center; padding: 1px 4px 0 4px; font-size: 11.500px; color: #444; letter-spacing: 0; }
.p-head-ic { display: flex; gap: 8px; align-items: center; }
.p-intro { height: 40px; flex: none; display: flex; justify-content: space-between; padding: 9px 10px 0 8px; }
.p-intro p { margin: 0; }
.p-layout { width: 41px; height: 24px; margin-top: -1px; border: 1px solid #9aa0a8; border-radius: 3px; background: linear-gradient(#fafbfc, #dfe3e8); display: flex; align-items: center; justify-content: center; gap: 6px; }
.p-list { height: 226px; flex: none; margin: 0 8px; background: #fff; border: 1px solid #b6bbc2; display: flex; overflow: hidden; }
.p-fields { flex: 1; padding-top: 3px; overflow: hidden; }
.fld { position: relative; height: 18px; display: flex; align-items: center; padding-left: 2px; white-space: nowrap; }
.fld.on { font-weight: 700; font-size: 11.500px; letter-spacing: -.1px; color: #111; padding-bottom: 1px; }
.fld.on .cb { margin-bottom: -1px; }
.cb { width: 12px; height: 12px; margin-right: 2px; flex: none; border: 1px solid #8e9499; background: linear-gradient(135deg, #d9dce0, #fff); display: flex; align-items: center; justify-content: center; font: normal 11px/1 "DejaVu Sans", sans-serif; color: #3a5fa8; }
.fld.on .cb { margin-right: 3px; }
.fld-f { position: absolute; left: 193px; top: 2px; }
.p-sb { width: 17px; flex: none; display: flex; flex-direction: column; align-items: center; position: relative; background: #fff; }
.sb-up, .sb-down { width: 0; height: 0; border-left: 3px solid transparent; border-right: 3px solid transparent; position: absolute; }
.sb-up { border-bottom: 3px solid #555; top: 8px; }
.sb-down { border-top: 3px solid #555; bottom: 6px; }
.sb-thumb { position: absolute; top: 74px; width: 15px; height: 61px; background: linear-gradient(90deg, #f0f2f4, #d5d8dc); border: 1px solid #c0c4c9; border-radius: 2px; display: flex; flex-direction: column; align-items: center; justify-content: center; gap: 1px; }
.sb-thumb i { width: 7px; height: 1px; background: #777; }
.p-rule { height: 1px; flex: none; background: #f7f9fb; margin-top: 6px; }
.p-drag { margin: 14px 0 0 8px; height: 13px; flex: none; }
.areas { display: grid; grid-template-columns: 110px 110px; column-gap: 9px; margin: 0 0 0 8px; }
.a-head { height: 21px; display: flex; align-items: center; white-space: nowrap; padding-left: 2px; }
.a-head span { margin-left: 9px; }
.a-head svg[width="16"] + span { margin-left: 7px; }
.a-head .a-sigma { font: bold 13px "Liberation Serif", serif; margin-left: 0; width: 12px; margin-right: 2px; text-align: center; color: #111; }
.a-box { background: #fff; border: 1px solid #a7acb3; overflow: hidden; }
.a-top { height: 71px; }
.a-bot { height: 72px; padding: 1px; margin-top: 1px; }
.a-scrollbox { display: flex; }
.pills { flex: 1; padding: 1px; display: flex; flex-direction: column; }
.pill { height: 18px; flex: none; display: flex; align-items: center; justify-content: space-between; padding: 0 8px 1px 6px; border: 1px solid #f0c75e; border-radius: 2px; background: linear-gradient(#fffdf5, #ffeec8); white-space: nowrap; font-size: 11px; }
.pill.wide { height: 17px; }
.small { width: 17px; background: #f4f6f8; }
.small .sb-thumb { top: 18px; width: 15px; height: 25px; }
.small .sb-down { bottom: 5px; }
.p-foot { display: flex; align-items: center; margin: 2px 0 0 8px; height: 24px; }
.cb-big { width: 13px; height: 13px; margin-right: 6px; }
.p-update { margin-left: auto; margin-right: 8px; width: 73px; height: 22px; border: 1px solid #b9bdc3; border-radius: 2px; background: #eef0f3; color: #8d9197; text-align: center; line-height: 20px; }
```
